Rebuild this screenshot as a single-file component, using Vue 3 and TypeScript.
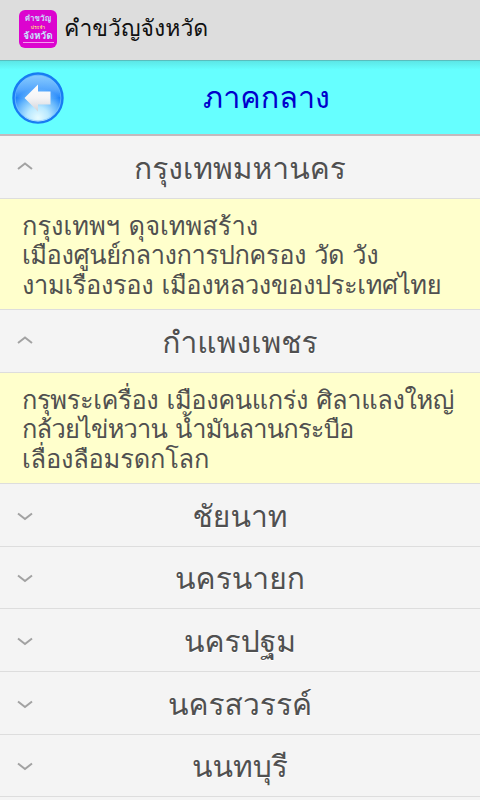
<script setup lang="ts">
interface MottoLine {
  text: string
  spacing: number
}

interface Province {
  name: string
  motto?: MottoLine[]
}

const provinces: Province[] = [
  {
    name: 'กรุงเทพมหานคร',
    motto: [
      { text: 'กรุงเทพฯ ดุจเทพสร้าง', spacing: 0.03 },
      { text: 'เมืองศูนย์กลางการปกครอง วัด วัง', spacing: -0.4 },
      { text: 'งามเรืองรอง เมืองหลวงของประเทศไทย', spacing: -0.33 },
    ],
  },
  {
    name: 'กำแพงเพชร',
    motto: [
      { text: 'กรุพระเครื่อง เมืองคนแกร่ง ศิลาแลงใหญ่', spacing: -0.36 },
      { text: 'กล้วยไข่หวาน น้ำมันลานกระบือ', spacing: -0.76 },
      { text: 'เลื่องลือมรดกโลก', spacing: -0.18 },
    ],
  },
  { name: 'ชัยนาท' },
  { name: 'นครนายก' },
  { name: 'นครปฐม' },
  { name: 'นครสวรรค์' },
  { name: 'นนทบุรี' },
  { name: '' },
]
</script>

<template>
  <div class="screen">
    <header class="appbar">
      <div class="logo">
        <span class="logo-top">คำขวัญ</span>
        <span class="logo-mid">ประจำ</span>
        <span class="logo-bottom">จังหวัด</span>
      </div>
      <span class="app-title">คำขวัญจังหวัด</span>
    </header>

    <div class="region">
      <button class="back" type="button">
        <svg width="54" height="54" viewBox="0 0 54 54">
          <defs>
            <radialGradient id="ball" cx="50%" cy="90%" r="88%">
              <stop offset="0" stop-color="#e6fbff" />
              <stop offset="0.25" stop-color="#b8e8ff" />
              <stop offset="0.5" stop-color="#62b4fc" />
              <stop offset="0.68" stop-color="#1c82fa" />
              <stop offset="1" stop-color="#2e90fa" />
            </radialGradient>
            <linearGradient id="gloss" x1="0" y1="0" x2="0" y2="1">
              <stop offset="0" stop-color="#8fd0ff" stop-opacity="0.9" />
              <stop offset="0.6" stop-color="#8dcbff" stop-opacity="0.5" />
              <stop offset="1" stop-color="#8dcbff" stop-opacity="0" />
            </linearGradient>
            <linearGradient id="arrow" x1="0" y1="0" x2="0" y2="1">
              <stop offset="0" stop-color="#ffffff" />
              <stop offset="0.5" stop-color="#f4f4f6" />
              <stop offset="1" stop-color="#d2d4da" />
            </linearGradient>
          </defs>
          <circle cx="27" cy="27" r="24.600" fill="url(#ball)" stroke="#187cf2" stroke-width="2.200" />
          <circle cx="27" cy="27" r="22.800" fill="none" stroke="#7cc6ff" stroke-width="1" opacity="0.6" />
          <path d="M5 26C5 12 16 4.500 27 4.500S49 12 49 26C38 29 16 29 5 26Z" fill="url(#gloss)" />
          <path d="M13.500 27L27 13.500V20.500H39.500V33.500H27V40.500Z" fill="url(#arrow)" />
        </svg>
      </button>
      <h1 class="region-title">ภาคกลาง</h1>
    </div>

    <section v-for="(p, i) in provinces" :key="i" class="province">
      <div class="row">
        <svg class="chevron" width="16" height="12" viewBox="0 0 16 12">
          <path :d="p.motto ? 'M1 7L8 1.500L15 7' : 'M1 3.500L8 9L15 3.500'" />
        </svg>
        <h2 class="name">{{ p.name }}</h2>
      </div>
      <div v-if="p.motto" class="motto">
        <p v-for="line in p.motto" :key="line.text" :style="{ letterSpacing: `${line.spacing}px` }">{{ line.text }}</p>
      </div>
    </section>
  </div>
</template>

<style>
body {
  margin: 0;
  background: #f4f4f4;
}
</style>

<style scoped>
.screen {
  width: 480px;
  height: 800px;
  overflow: hidden;
  background: #f4f4f4;
  color: #505050;
  font-family: Loma, 'Noto Sans', sans-serif;
}

.appbar {
  display: flex;
  align-items: center;
  box-sizing: border-box;
  height: 60px;
  padding-left: 19px;
  background: #dddddd;
}

.logo {
  display: flex;
  flex-direction: column;
  align-items: center;
  box-sizing: border-box;
  width: 38px;
  height: 38px;
  margin-top: -3px;
  padding-top: 2px;
  border-radius: 6px;
  background: #dc04cf;
  color: #c6edff;
  font-weight: 700;
  white-space: nowrap;
}

.logo-top {
  font-size: 8px;
  line-height: 13px;
}

.logo-mid {
  color: #ffe27a;
  font-size: 5px;
  line-height: 5px;
}

.logo-bottom {
  width: 31px;
  height: 12px;
  border-bottom: 1px solid #f59af0;
  font-size: 10px;
  line-height: 11px;
  text-align: center;
}

.app-title {
  margin: -5px 0 0 7px;
  color: #111111;
  font-size: 23px;
  line-height: 30px;
  white-space: nowrap;
}

.region {
  display: grid;
  grid-template-columns: 75px 1fr 25px;
  align-items: center;
  box-sizing: border-box;
  height: 76px;
  border-top: 1px solid #58bebe;
  border-bottom: 2px solid #c3b9bd;
  background: linear-gradient(#5ce6e6, #66ffff 9px);
}

.back {
  display: flex;
  margin: 0 0 0 10.500px;
  padding: 0;
  border: 0;
  background: none;
}

.region-title {
  margin: 0 0 1px;
  padding-left: 3px;
  color: #0000cc;
  font-size: 30.500px;
  font-weight: 400;
  line-height: 40px;
  text-align: center;
}

.row {
  display: grid;
  grid-template-columns: 60px 1fr 60px;
  align-items: center;
  box-sizing: border-box;
  height: 62.670px;
  border-bottom: 1px solid #dddddd;
}

.chevron {
  margin: 2px 0 0 17px;
  fill: none;
  stroke: #a2a2a2;
  stroke-width: 2;
}

.name {
  margin: 4px 0 0;
  font-size: 30px;
  font-weight: 400;
  line-height: 40px;
  text-align: center;
  text-shadow: 0 1px 0 #ffffff;
  white-space: nowrap;
}

.motto {
  box-sizing: border-box;
  height: 111.330px;
  padding: 13px 0 0 22px;
  border-bottom: 1px solid #dddddd;
  background: #ffffcc;
  white-space: nowrap;
}

.motto p {
  margin: 0;
  font-size: 25.400px;
  line-height: 29.500px;
}
</style>
